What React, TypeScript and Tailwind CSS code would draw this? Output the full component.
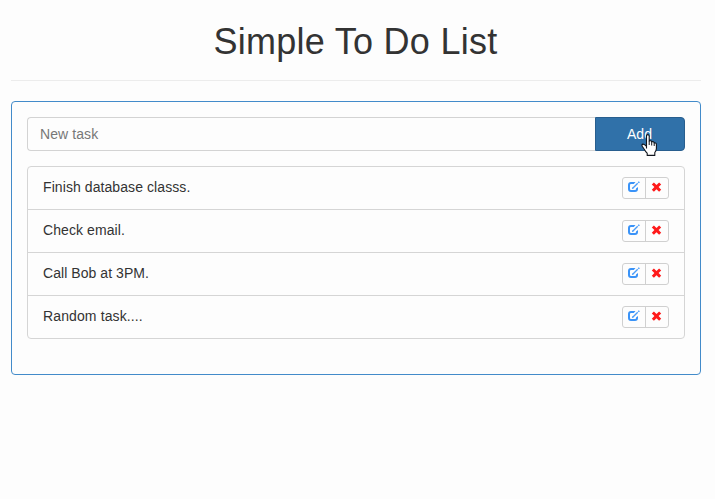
const tasks = [
  { text: "Finish database classs.", tracking: "tracking-[0.08px]" },
  { text: "Check email.", tracking: "tracking-[0.08px]" },
  { text: "Call Bob at 3PM.", tracking: "tracking-[0.06px]" },
  { text: "Random task....", tracking: "tracking-[0.12px]" },
];

function EditIcon() {
  return (
    <svg width="13" height="12" viewBox="0 0 13 12" fill="none" className="block">
      <path
        d="M8.5 1H4Q1 1.2 1 4V8Q1 11 4 11H8Q11 11 11 8V6L9 7.6V8.2Q9 9 8 9H4Q3 9 3 8V4Q3 3 4 3H6.8Z"
        fill="#3a93f8"
      />
      <path d="M6 7L10.7 2.3" stroke="#4b9cf8" strokeWidth="1.3" />
      <path d="M4.9 7.9L5.3 6.1L6.7 7.5Z" fill="#3a93f8" />
      <path d="M11.3 1.7L12.3 0.7" stroke="#4b9cf8" strokeWidth="1.6" />
    </svg>
  );
}

function RemoveIcon() {
  return (
    <svg width="12" height="12" viewBox="0 0 12 12" className="block">
      <path
        d="M3.9 1.4L6.5 4L9.1 1.4L11.2 3.5L8.6 6.1L11.2 8.7L9.1 10.8L6.5 8.2L3.9 10.8L1.8 8.7L4.4 6.1L1.8 3.5Z"
        fill="#ff1a1a"
      />
    </svg>
  );
}

function HandCursor() {
  return (
    <svg
      width="17"
      height="23"
      viewBox="0 0 17 23"
      className="pointer-events-none absolute left-[45px] top-[16px]"
    >
      <path
        d="M5.5 14.5V2Q5.5 .6 6.8 .6T8.2 2V7Q10.2 6.2 10.7 7.8Q12.7 7.2 13.2 8.9Q15.4 8.5 15.4 10.8V14.5Q15.4 16.5 13.8 18.5V21.4H6.2V19.2Q4.8 18.2 3.4 15.5L1.2 12.2Q.4 10.4 2 10.1Q3.5 10 5.5 12.5"
        fill="#fff"
        stroke="#10151d"
        strokeWidth="1.1"
        strokeLinejoin="round"
      />
      <path d="M8.2 7V11M10.7 8V11.5M13.2 9V12" stroke="#10151d" strokeWidth="1" />
    </svg>
  );
}

export default function App() {
  return (
    <main className="min-h-screen bg-[#fdfdfd] pt-[22px] pr-[14px] pl-[11px] font-['Liberation_Sans',Arial,sans-serif] text-sm leading-5 text-[#333]">
      <h1 className="h-[58px] pr-px text-center text-[36px] leading-10 tracking-[0.27px]">Simple To Do List</h1>
      <hr className="mb-5 border-[#ececec]" />
      <section className="h-[274px] rounded border border-[#428bca] p-[15px]">
        <form className="flex h-[34px]" onSubmit={(e) => e.preventDefault()}>
          <input
            placeholder="New task"
            className="min-w-0 flex-1 rounded-l border border-r-0 border-[#d3d3d3] px-3 tracking-[0.08px] outline-none placeholder:text-[#777]"
          />
          <button className="relative w-[90px] rounded-r border border-[#285e8e] bg-[#3071a9] pr-px text-white">
            Add
            <HandCursor />
          </button>
        </form>
        <ul className="mt-[15px] divide-y divide-[#d5d5d5] rounded border border-[#d5d5d5]">
          {tasks.map(({ text, tracking }) => (
            <li key={text} className="flex h-[43px] items-center justify-between px-[15px] last:h-[42px]">
              <span className={`pb-0.5 ${tracking}`}>{text}</span>
              <div className="flex h-[22px] w-[47px] divide-x divide-[#d0d0d0] rounded-[3px] border border-[#d0d0d0]">
                <button className="flex w-[23px] items-start justify-start pt-[3px] pl-1" aria-label="Edit">
                  <EditIcon />
                </button>
                <button className="flex flex-1 items-start justify-start pt-[3px] pl-1" aria-label="Remove">
                  <RemoveIcon />
                </button>
              </div>
            </li>
          ))}
        </ul>
      </section>
    </main>
  );
}
